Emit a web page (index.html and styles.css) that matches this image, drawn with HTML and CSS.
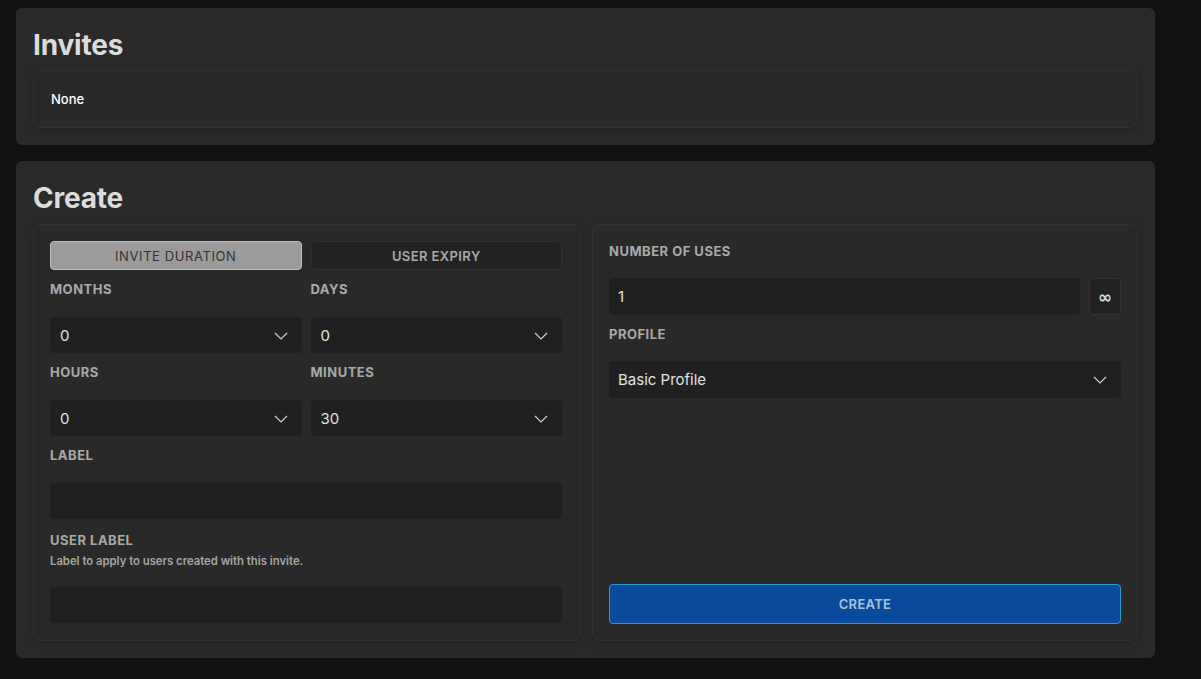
FILE: index.html
```html
<!DOCTYPE html>
<html>
<head>
<meta charset="utf-8">
<link rel="stylesheet" href="styles.css">
</head>
<body>
<section class="card">
  <h1 class="card-title">Invites</h1>
  <div class="panel invites-list">None</div>
</section>
<section class="card">
  <h1 class="card-title">Create</h1>
  <div class="create-grid">
    <div class="panel left">
      <div class="two-col">
        <button class="tab active">INVITE DURATION</button>
        <button class="tab">USER EXPIRY</button>
      </div>
      <div class="two-col">
        <div class="field">
          <div class="label">MONTHS</div>
          <div class="select"><span>0</span><svg class="chev" width="14" height="8" viewBox="0 0 14 8"><path d="M1 1 L7 7 L13 1" fill="none" stroke="#cfcfcf" stroke-width="1.2"/></svg></div>
        </div>
        <div class="field">
          <div class="label">DAYS</div>
          <div class="select"><span>0</span><svg class="chev" width="14" height="8" viewBox="0 0 14 8"><path d="M1 1 L7 7 L13 1" fill="none" stroke="#cfcfcf" stroke-width="1.2"/></svg></div>
        </div>
        <div class="field">
          <div class="label">HOURS</div>
          <div class="select"><span>0</span><svg class="chev" width="14" height="8" viewBox="0 0 14 8"><path d="M1 1 L7 7 L13 1" fill="none" stroke="#cfcfcf" stroke-width="1.2"/></svg></div>
        </div>
        <div class="field">
          <div class="label">MINUTES</div>
          <div class="select"><span>30</span><svg class="chev" width="14" height="8" viewBox="0 0 14 8"><path d="M1 1 L7 7 L13 1" fill="none" stroke="#cfcfcf" stroke-width="1.2"/></svg></div>
        </div>
      </div>
      <div class="field">
        <div class="label">LABEL</div>
        <div class="input"></div>
      </div>
      <div class="field">
        <div class="label tight">USER LABEL</div>
        <div class="desc">Label to apply to users created with this invite.</div>
        <div class="input"></div>
      </div>
    </div>
    <div class="panel right">
      <div class="field">
        <div class="label first">NUMBER OF USES</div>
        <div class="uses-row">
          <div class="input value">1</div>
          <button class="inf">∞</button>
        </div>
      </div>
      <div class="field">
        <div class="label r">PROFILE</div>
        <div class="select"><span>Basic Profile</span><svg class="chev" width="14" height="8" viewBox="0 0 14 8"><path d="M1 1 L7 7 L13 1" fill="none" stroke="#cfcfcf" stroke-width="1.2"/></svg></div>
      </div>
      <div class="spacer"></div>
      <button class="create">CREATE</button>
    </div>
  </div>
</section>
</body>
</html>
```
FILE: styles.css
```css
* { box-sizing: border-box; }
html, body { background: #111111; }
body {
  margin: 0;
  padding: 8px 46px 8px 16px;
  font-family: Inter, "Noto Sans", sans-serif;
  color: #dddddd;
}
.card {
  width: 1139px;
  background: #2a2a2a;
  border-radius: 6px;
  padding: 17px 17px 17px 17px;
  margin-bottom: 16px;
}
.card-title {
  margin: 0;
  font-size: 28px;
  font-weight: 700;
  line-height: 40px;
  color: #dcdcdc;
  height: 45px;
  letter-spacing: -0.2px;
}
.panel {
  background: #292929;
  border: 1px solid #323232;
  border-radius: 8px;
  box-shadow: 0 2px 6px rgba(0,0,0,0.15);
}
.invites-list {
  height: 58px;
  padding: 0 17px;
  display: flex;
  align-items: center;
  font-size: 13px;
  font-weight: 500;
  color: #ffffff;
}
.create-grid {
  display: grid;
  grid-template-columns: 548px 546px;
  gap: 11px;
  margin-top: 1px;
}
.left {
  padding: 16px 18px 17px 16px;
}
.right {
  padding: 16px 16px 16px 16px;
  display: flex;
  flex-direction: column;
}
.two-col {
  display: grid;
  grid-template-columns: 1fr 1fr;
  column-gap: 9px;
}
.tab {
  height: 29px;
  border-radius: 4px;
  font-family: Inter, sans-serif;
  font-size: 13px;
  letter-spacing: 0.6px;
  padding: 0;
}
.tab.active {
  background: #9b9b9b;
  border: 1px solid #bdbdbd;
  color: #333333;
  font-weight: 400;
}
.tab:not(.active) {
  background: #232323;
  border: 1px solid #303030;
  color: #a9a9a9;
  font-weight: 600;
  letter-spacing: 0.4px;
}
.label {
  font-size: 13px;
  font-weight: 700;
  color: #a9a9a9;
  line-height: 20px;
  letter-spacing: 0.5px;
  margin: 9px 0 18px;
}
.label.first { margin: 0 0 17px; }
.label.r { margin-bottom: 17px; }
.label.tight { margin: 11px 0 4px; }
.desc {
  font-size: 11.3px;
  font-weight: 600;
  color: #a5a5a5;
  line-height: 14px;
  margin-bottom: 19px;
}
.select, .input {
  height: 36px;
  background: #202020;
  border-radius: 4px;
  display: flex;
  align-items: center;
  justify-content: space-between;
  padding: 0 14px 0 10px;
  font-size: 15px;
  color: #e2e2e2;
}
.right .select { height: 37px; padding-left: 9px; }
.chev { display: block; margin-top: 1px; }
.uses-row {
  display: flex;
  gap: 9px;
}
.uses-row .input { flex: 1; height: 37px; padding-left: 9px; }
.inf {
  width: 32px;
  height: 37px;
  background: #222222;
  border: 1px solid #343434;
  border-radius: 4px;
  color: #d8e0ea;
  font-size: 17px;
  font-weight: 700;
  padding: 0;
  font-family: "DejaVu Sans", sans-serif;
}
.spacer { flex: 1; }
.create {
  height: 40px;
  background: #0a4b9d;
  border: 1px solid #2c9ad6;
  border-radius: 4px;
  color: #a9c3d6;
  font-family: Inter, sans-serif;
  font-size: 13px;
  font-weight: 600;
  letter-spacing: 0.3px;
}
```
